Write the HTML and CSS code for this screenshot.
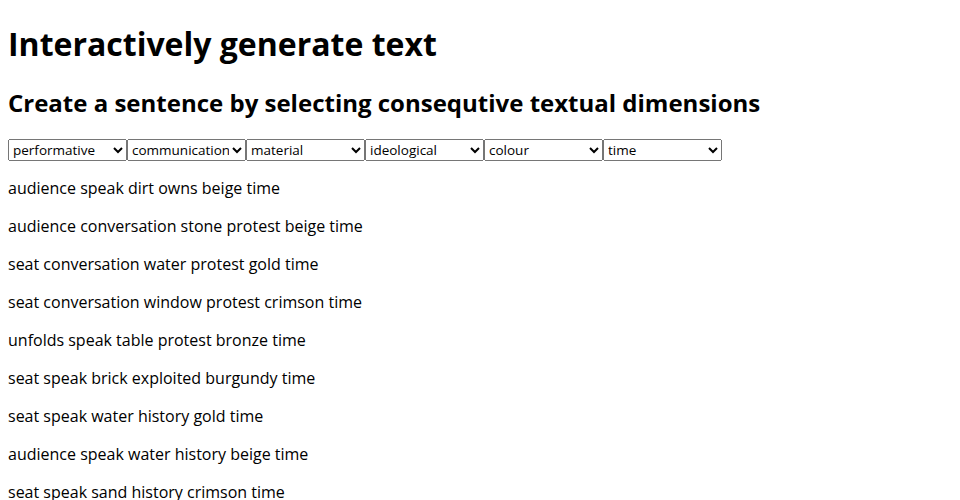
FILE: index.html
```html
<!DOCTYPE html>
<html lang="en">
<head>
    <meta charset="UTF-8">
    <meta name="viewport" content="width=device-width, initial-scale=1.0">
    <title>Interactively generate text</title>
    <link rel="stylesheet" href="styles.css">
</head>
<body>

    <h1>Interactively generate text</h1>
    <h2>Create a sentence by selecting consequtive textual dimensions</h2>

    <div class="dimensions">
        <select><option>performative</option></select><select><option>communication</option></select><select><option>material</option></select><select><option>ideological</option></select><select><option>colour</option></select><select><option>time</option></select>
    </div>

    <div id="sentences">
        <p>audience speak dirt owns beige time</p>
        <p>audience conversation stone protest beige time</p>
        <p>seat conversation water protest gold time</p>
        <p>seat conversation window protest crimson time</p>
        <p>unfolds speak table protest bronze time</p>
        <p>seat speak brick exploited burgundy time</p>
        <p>seat speak water history gold time</p>
        <p>audience speak water history beige time</p>
        <p>seat speak sand history crimson time</p>
    </div>

</body>
</html>
```

FILE: styles.css
```css
body {
    font-family: "Open Sans", sans-serif;
}

h1 {
    margin-top: 14px;
}

.dimensions {
    display: flex;
    margin-top: 2px;
    margin-bottom: 16px;
}

select {
    font-family: "Open Sans", sans-serif;
    font-size: 13.5px;
    width: 119px;
    height: 22px;
    margin: 0;
}
```
